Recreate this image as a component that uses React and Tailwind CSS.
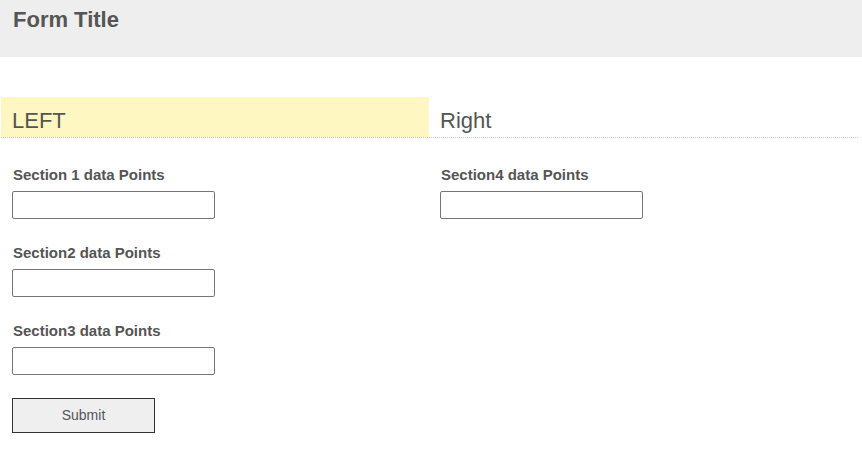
import React from "react";

function Field({ label }) {
  return (
    <div className="flex flex-col mb-[25px]">
      <label className="text-[15px] leading-[17px] font-bold text-[#555] mb-[8px] pl-[1px]">{label}</label>
      <input type="text" className="w-[203px] h-[28px] border border-[#767676] rounded-[2px] bg-white outline-none" />
    </div>
  );
}

export default function App() {
  return (
    <div className="w-[862px] h-[467px] bg-white" style={{ fontFamily: '"Liberation Sans", Arial, sans-serif' }}>
      <div className="h-[57px] bg-[#eeeeee] pl-[13px] pt-[7px]">
        <h1 className="text-[22px] leading-[26px] font-bold text-[#555]">Form Title</h1>
      </div>
      <div className="mt-[40px] ml-[1px] w-[857px] grid grid-cols-[428px_1fr] border-b border-dotted border-[#c8c8c8]">
        <div className="h-[40px] bg-[#fef7c1] pl-[11px] pt-[11px] text-[22px] leading-[26px] text-[#555]">LEFT</div>
        <div className="h-[40px] pl-[11px] pt-[11px] text-[22px] leading-[26px] text-[#555]">Right</div>
      </div>
      <div className="ml-[1px] w-[857px] grid grid-cols-[428px_1fr] pt-[28px]">
        <div className="pl-[11px] flex flex-col">
          <Field label="Section 1 data Points" />
          <Field label="Section2 data Points" />
          <Field label="Section3 data Points" />
          <button className="-mt-[2px] w-[143px] h-[35px] border border-[#333] bg-[#efefef] text-[14px] text-[#555]">Submit</button>
        </div>
        <div className="pl-[11px] flex flex-col">
          <Field label="Section4 data Points" />
        </div>
      </div>
    </div>
  );
}
